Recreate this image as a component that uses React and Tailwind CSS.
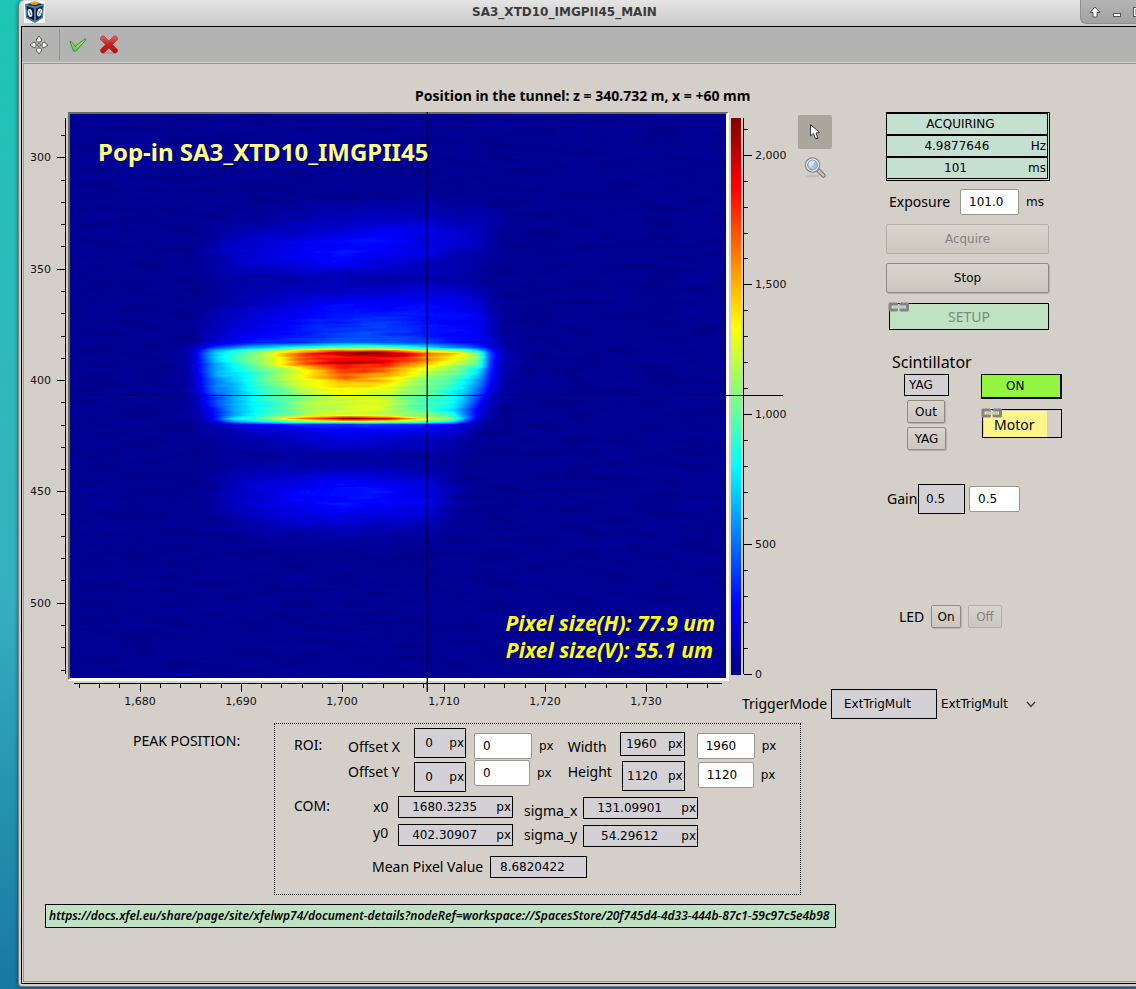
import React from "react";

const UI = "font-['Noto_Sans',sans-serif]";

/* ---------- beam image ---------- */

const XS = [170, 190, 200, 215, 235, 260, 285, 300, 320, 342, 365, 385, 405, 428, 450, 465, 480, 490, 505, 530];

// [y, intensity at each of XS], 0 = background, 100 = saturated
const ROWS = [
  [200, [2, 2, 2, 2, 2, 2, 2, 2, 3, 3, 3, 3, 3, 3, 3, 2, 2, 2, 2, 2]],
  [216, [2, 2, 2, 2, 3, 3, 4, 4, 5, 5, 6, 6, 6, 6, 5, 5, 5, 4, 2, 2]],
  [230, [2, 2, 2, 3, 4, 5, 6, 7, 8, 9, 10, 11, 11, 10, 8, 7, 6, 4, 2, 2]],
  [242, [2, 2, 2, 4, 7, 8, 10, 11, 12, 13, 14, 13, 12, 10, 9, 8, 6, 4, 2, 2]],
  [252, [2, 2, 3, 5, 8, 9, 11, 12, 13, 14, 13, 12, 11, 9, 7, 6, 4, 3, 2, 2]],
  [264, [2, 2, 3, 4, 7, 8, 9, 10, 11, 11, 10, 9, 8, 6, 5, 4, 3, 3, 2, 2]],
  [278, [2, 2, 2, 3, 4, 4, 4, 5, 5, 5, 4, 4, 4, 4, 4, 4, 3, 2, 2, 2]],
  [292, [2, 2, 2, 3, 4, 5, 6, 6, 7, 7, 8, 8, 9, 9, 9, 8, 5, 3, 2, 2]],
  [305, [2, 2, 2, 3, 5, 7, 9, 10, 12, 13, 13, 13, 13, 13, 12, 11, 9, 4, 2, 2]],
  [320, [2, 2, 3, 5, 8, 10, 12, 13, 15, 16, 17, 17, 16, 14, 13, 13, 12, 6, 2, 2]],
  [335, [2, 2, 4, 7, 10, 12, 14, 15, 17, 19, 20, 20, 18, 15, 13, 13, 12, 7, 3, 2]],
  [342, [2, 2, 5, 9, 12, 14, 16, 18, 20, 22, 23, 22, 20, 18, 15, 14, 12, 8, 3, 2]],
  [347, [2, 3, 8, 18, 25, 32, 38, 42, 46, 48, 47, 45, 42, 36, 28, 24, 18, 10, 3, 2]],
  [350, [2, 4, 14, 31, 40, 48, 58, 64, 72, 78, 77, 75, 70, 60, 52, 46, 34, 16, 4, 2]],
  [353, [2, 4, 16, 34, 44, 56, 73, 81, 89, 99, 100, 100, 94, 80, 68, 60, 48, 18, 5, 2]],
  [357, [2, 4, 15, 33, 43, 53, 66, 79, 83, 89, 88, 89, 83, 74, 64, 58, 48, 18, 5, 2]],
  [362, [2, 4, 15, 32, 42, 52, 66, 77, 87, 99, 93, 91, 81, 72, 60, 53, 46, 17, 5, 2]],
  [368, [2, 4, 14, 30, 38, 47, 58, 65, 73, 82, 82, 79, 70, 60, 53, 48, 38, 16, 4, 2]],
  [380, [2, 4, 12, 26, 33, 44, 54, 60, 65, 74, 71, 69, 60, 52, 46, 38, 27, 13, 4, 2]],
  [388, [2, 4, 11, 24, 31, 42, 51, 57, 61, 65, 64, 62, 54, 48, 42, 35, 23, 10, 3, 2]],
  [398, [2, 3, 9, 20, 30, 40, 47, 52, 56, 59, 59, 57, 50, 45, 39, 31, 16, 7, 3, 2]],
  [410, [2, 3, 6, 15, 29, 39, 46, 51, 56, 59, 59, 56, 50, 45, 38, 24, 10, 5, 2, 2]],
  [415, [2, 3, 5, 14, 31, 41, 48, 53, 58, 63, 62, 60, 55, 50, 44, 25, 8, 4, 2, 2]],
  [418, [2, 2, 4, 15, 38, 48, 61, 72, 86, 99, 97, 91, 75, 60, 52, 27, 7, 4, 2, 2]],
  [421, [2, 2, 4, 10, 29, 40, 49, 52, 56, 60, 60, 58, 54, 48, 42, 20, 6, 3, 2, 2]],
  [424, [2, 2, 3, 5, 9, 13, 15, 17, 18, 18, 18, 18, 17, 15, 13, 7, 4, 3, 2, 2]],
  [429, [2, 2, 3, 4, 6, 8, 9, 10, 12, 13, 13, 13, 12, 11, 10, 6, 3, 2, 2, 2]],
  [440, [2, 2, 2, 3, 4, 5, 6, 7, 8, 9, 9, 8, 7, 6, 5, 4, 2, 2, 2, 2]],
  [456, [2, 2, 2, 2, 3, 3, 3, 3, 3, 3, 3, 3, 3, 3, 3, 2, 2, 2, 2, 2]],
  [468, [2, 2, 2, 2, 4, 5, 5, 5, 5, 5, 5, 5, 5, 4, 3, 2, 2, 2, 2, 2]],
  [480, [2, 2, 2, 3, 6, 7, 9, 10, 11, 12, 12, 11, 9, 8, 4, 2, 2, 2, 2, 2]],
  [492, [2, 2, 2, 3, 7, 9, 11, 13, 13, 14, 14, 13, 12, 11, 5, 3, 2, 2, 2, 2]],
  [504, [2, 2, 2, 3, 7, 9, 11, 12, 13, 14, 13, 13, 11, 10, 4, 2, 2, 2, 2, 2]],
  [518, [2, 2, 2, 3, 4, 6, 8, 9, 9, 9, 9, 9, 8, 7, 3, 2, 2, 2, 2, 2]],
  [534, [2, 2, 2, 2, 2, 3, 4, 4, 4, 4, 4, 4, 3, 3, 2, 2, 2, 2, 2, 2]],
  [552, [2, 2, 2, 2, 2, 2, 2, 2, 2, 2, 2, 2, 2, 2, 2, 2, 2, 2, 2, 2]],
];

function profile(y) {
  let i = 0;
  while (i < ROWS.length - 2 && ROWS[i + 1][0] < y) i += 1;
  const [ya, a] = ROWS[i];
  const [yb, b] = ROWS[i + 1];
  const t = Math.min(1, Math.max(0, (y - ya) / (yb - ya)));
  return a.map((v, k) => {
    const ripple = 1 + 0.02 * Math.sin(y * 1.3 + k * 0.9) + 0.015 * Math.sin(y * 0.7 - k * 1.3);
    return Math.min(100, (v + (b[k] - v) * t) * ripple);
  });
}

const STRIPS = Array.from({ length: 352 }, (_, i) => 200 + i);

const JET_R = "0 0 0 0 0.5 1 1 1 0.5";
const JET_G = "0 0 0.5 1 1 1 0.5 0 0";
const JET_B = "0.5 1 1 1 0.5 0 0 0 0";

function Beam() {
  return (
    <>
      <defs>
        <filter id="jet" filterUnits="userSpaceOnUse" x="70" y="114" width="656" height="564" colorInterpolationFilters="sRGB">
          <feTurbulence type="fractalNoise" baseFrequency="0.025 0.16" numOctaves="2" seed="7" result="t" />
          <feColorMatrix in="t" type="matrix" values="1 0 0 0 0  1 0 0 0 0  1 0 0 0 0  0 0 0 0 1" result="n" />
          <feGaussianBlur in="SourceGraphic" stdDeviation="3 0.6" result="s" />
          <feComposite in="s" in2="n" operator="arithmetic" k1="0.12" k2="0.93" k3="0.03" k4="-0.016" result="m" />
          <feColorMatrix in="m" type="matrix" values="1 0 0 0 0  0 1 0 0 0  0 0 1 0 0  0 0 0 0 1" />
          <feComponentTransfer>
            <feFuncR type="table" tableValues={JET_R} />
            <feFuncG type="table" tableValues={JET_G} />
            <feFuncB type="table" tableValues={JET_B} />
          </feComponentTransfer>
        </filter>
        {STRIPS.map((y) => (
          <linearGradient key={y} id={`r${y}`} gradientUnits="userSpaceOnUse" x1="170" y1="0" x2="530" y2="0">
            {profile(y).map((v, k) => {
              const g = Math.round(v * 2.55);
              return <stop key={k} offset={(XS[k] - 170) / 360} stopColor={`rgb(${g},${g},${g})`} />;
            })}
          </linearGradient>
        ))}
      </defs>
      <g filter="url(#jet)">
        <rect x="60" y="104" width="676" height="584" fill="rgb(5,5,5)" />
        {STRIPS.map((y) => (
          <rect key={y} x="60" y={y} width="676" height="1" fill={`url(#r${y})`} />
        ))}
      </g>
    </>
  );
}

/* ---------- plot ---------- */

const Y_MAJOR = [[157, "300"], [269, "350"], [380, "400"], [491, "450"], [603, "500"]];
const Y_MINOR = [135, 180, 202, 224, 246, 291, 313, 336, 358, 402, 425, 447, 469, 514, 536, 558, 580, 625, 647, 670];
const X_MAJOR = [[140, "1,680"], [241, "1,690"], [342, "1,700"], [444, "1,710"], [545, "1,720"], [646, "1,730"]];
const X_MINOR = [79, 99, 119, 160, 180, 200, 221, 261, 281, 302, 322, 362, 383, 403, 423, 464, 484, 504, 525, 565, 585, 606, 626, 666, 687, 707];

function Plot() {
  return (
    <svg className="block shrink-0 font-['DejaVu_Sans',sans-serif]" width="705" height="600" viewBox="24 112 705 600" role="img" aria-label="Camera image">
      <Beam />
      <path d="M68 680V112H729L727 114H70V678Z" fill="#6b6966" />
      <path d="M68 681L70 678H726V114L729 112V681Z" fill="#fff" />
      <g stroke="#000" strokeWidth="1" shapeRendering="crispEdges">
        <path d="M65.5 118V674M74 683.5H722" />
        <path d={Y_MAJOR.map(([y]) => `M57 ${y}.5H65`).join("") + Y_MINOR.map((y) => `M61 ${y}.5H65`).join("")} />
        <path d={X_MAJOR.map(([x]) => `M${x}.5 684V692`).join("") + X_MINOR.map((x) => `M${x}.5 684V688`).join("")} />
        <path d="M78 395.5H729M427.5 112V692" />
        <path d="M426.5 112V692" opacity="0.4" />
      </g>
      <g fontSize="11" fill="#111">
        {Y_MAJOR.map(([y, t]) => <text key={t} x="51" y={y + 4} textAnchor="end">{t}</text>)}
        {X_MAJOR.map(([x, t]) => <text key={t} x={x} y="705" textAnchor="middle">{t}</text>)}
      </g>
      <g className="font-['Noto_Sans',sans-serif]" fontWeight="700">
        <text x="98" y="161" fontSize="24" fill="#ffff7f">Pop-in SA3_XTD10_IMGPII45</text>
        <g fontSize="21" fontStyle="italic" fill="#ffff00" textAnchor="end">
          <text x="715" y="631">Pixel size(H): 77.9 um</text>
          <text x="713" y="658">Pixel size(V): 55.1 um</text>
        </g>
      </g>
    </svg>
  );
}

const C_MAJOR = [[155, "2,000"], [284, "1,500"], [414, "1,000"], [544, "500"], [674, "0"]];
const C_MINOR = [129, 181, 207, 233, 258, 310, 336, 362, 388, 440, 466, 492, 518, 570, 596, 622, 648];

function ColorBar() {
  return (
    <svg className="block shrink-0 font-['DejaVu_Sans',sans-serif]" width="67" height="572" viewBox="729 112 67 572" role="img" aria-label="Color scale">
      <defs>
        <linearGradient id="bar" x1="0" y1="0" x2="0" y2="1">
          <stop offset="0" stopColor="#800000" />
          <stop offset="0.125" stopColor="#ff0000" />
          <stop offset="0.375" stopColor="#ffff00" />
          <stop offset="0.5" stopColor="#80ff80" />
          <stop offset="0.625" stopColor="#00ffff" />
          <stop offset="0.875" stopColor="#0000ff" />
          <stop offset="1" stopColor="#000080" />
        </linearGradient>
      </defs>
      <rect x="731" y="118" width="10" height="557" fill="url(#bar)" />
      <g stroke="#000" strokeWidth="1" shapeRendering="crispEdges">
        <path d="M743.5 118V674M729 395.5H783" />
        <path d={C_MAJOR.map(([y]) => `M744 ${y}.5H752`).join("") + C_MINOR.map((y) => `M744 ${y}.5H748`).join("")} />
      </g>
      <g fontSize="11" fill="#111">
        {C_MAJOR.map(([y, t]) => <text key={t} x="755" y={y + 4}>{t}</text>)}
      </g>
    </svg>
  );
}

/* ---------- icons ---------- */

function CubeIcon() {
  return (
    <svg width="21" height="22" viewBox="0 0 21 22" aria-hidden="true">
      <rect width="21" height="22" fill="#fff" />
      <path d="M1 3L10.500 1L20 3L19 17L11 22L2 17Z" fill="#3f86a8" />
      <path d="M2.500 5L10 7.500V19.500L3.500 16Z" fill="#0c1540" />
      <path d="M18.500 5L12 7.500V19.500L17.500 16Z" fill="#0c1540" />
      <path d="M3 3.500L10.500 2L18 3.500L11 5.500Z" fill="#12384f" />
      <ellipse cx="10.500" cy="2" rx="4" ry="1.800" fill="#f59f0a" />
      <ellipse cx="6" cy="12" rx="2.300" ry="4" fill="#e6eaf0" transform="rotate(-12 6 12)" />
      <ellipse cx="15.500" cy="11.500" rx="2.300" ry="4" fill="#e6eaf0" transform="rotate(14 15.500 11.500)" />
      <path d="M5 9.500L7 14M14.500 13.500L16.500 9.500M14.500 10.500L16.500 12.500" stroke="#5a6a90" strokeWidth="0.900" />
    </svg>
  );
}

function MoveIcon() {
  return (
    <svg width="20" height="20" viewBox="0 0 20 20" aria-hidden="true" fill="#f1f1ee" stroke="#5c5c58" strokeWidth="1" strokeLinejoin="round">
      <path d="M10 1L13 5L11.500 7H8.500L7 5Z" />
      <path d="M10 19L13 15L11.500 13H8.500L7 15Z" />
      <path d="M1 10L5 7L7 8.500V11.500L5 13Z" />
      <path d="M19 10L15 7L13 8.500V11.500L15 13Z" />
      <circle cx="10" cy="10" r="1.400" />
    </svg>
  );
}

function CheckIcon() {
  return (
    <svg width="18" height="16" viewBox="0 0 18 16" aria-hidden="true">
      <defs>
        <linearGradient id="ck" x1="0" y1="0" x2="0" y2="1">
          <stop offset="0" stopColor="#b4f08a" />
          <stop offset="1" stopColor="#4fd02c" />
        </linearGradient>
      </defs>
      <path d="M1 4.500L3.500 5.500L6 9.500L16.500 1.500L16 4L6.500 14.500L4.500 14Z" fill="url(#ck)" stroke="#3c8a3c" strokeWidth="1" strokeLinejoin="round" />
    </svg>
  );
}

function CrossIcon() {
  return (
    <svg width="20" height="20" viewBox="0 0 20 20" aria-hidden="true">
      <defs>
        <linearGradient id="cx" x1="0" y1="0" x2="0" y2="1">
          <stop offset="0" stopColor="#e26060" />
          <stop offset="0.500" stopColor="#cc2020" />
          <stop offset="1" stopColor="#b50f0f" />
        </linearGradient>
      </defs>
      <ellipse cx="10" cy="18" rx="7" ry="1.200" fill="#9d9d9d" />
      <path d="M3 1L5 1L10 6L15 1H17L18.500 3V4.500L13.500 9.500L18.500 14.500V16.500L17 18H15L10 13L5 18H3L1.500 16.500V14.500L6.500 9.500L1.500 4.500V3Z" fill="url(#cx)" stroke="#b02a2a" strokeWidth="0.600" strokeLinejoin="round" />
    </svg>
  );
}

function PointerIcon() {
  return (
    <svg width="12" height="18" viewBox="0 0 12 18" aria-hidden="true">
      <path d="M1.500 1.500V13L4.300 10.500L6.500 15.500H9L7 10L10.500 9.500Z" fill="#fff" stroke="#3a3a38" strokeWidth="1" strokeLinejoin="round" />
    </svg>
  );
}

function MagnifierIcon() {
  return (
    <svg width="24" height="24" viewBox="0 0 24 24" aria-hidden="true">
      <ellipse cx="10" cy="20" rx="7" ry="1.500" fill="#bfbbb3" />
      <path d="M15 14L20.500 19.500" stroke="#77756f" strokeWidth="4.500" strokeLinecap="round" />
      <path d="M15 14L20.500 19.500" stroke="#c9c8c5" strokeWidth="2.200" strokeLinecap="round" />
      <circle cx="9.500" cy="9" r="7" fill="#9bb7d8" stroke="#8b8b88" strokeWidth="1.400" />
      <circle cx="9.500" cy="9" r="5.800" fill="#a9c0dd" stroke="#f3f4f6" strokeWidth="1.200" />
      <circle cx="9.500" cy="9" r="4.900" fill="none" stroke="#6f95c8" strokeWidth="0.900" />
      <path d="M5.500 9A4 4 0 0 1 12 5.500L8 12Z" fill="#dbe6f2" />
    </svg>
  );
}

function LinkIcon() {
  return (
    <svg className="absolute -top-0.5 -left-0.5" width="22" height="10" viewBox="0 0 22 10" aria-hidden="true">
      <path d="M5 5H17" stroke="#c8c8c8" strokeWidth="2" />
      <path d="M8.500 3.500V2H2V8H8.500V6.500M13 3.500V2H19.500V8H13V6.500" fill="none" stroke="#848484" strokeWidth="3" strokeLinejoin="round" />
      <path d="M7 5H15" stroke="#c8c8c8" strokeWidth="1.600" />
    </svg>
  );
}

/* ---------- controls ---------- */

function Label({ children, htmlFor, className = "" }) {
  const cls = `${UI} text-sm leading-5 whitespace-nowrap ${className}`;
  return htmlFor ? <label htmlFor={htmlFor} className={cls}>{children}</label> : <span className={cls}>{children}</span>;
}

function Readout({ value, unit, label, className = "" }) {
  return (
    <output aria-label={label} className={`flex items-center border border-black bg-[#d4d1d6] pr-px ${className}`}>
      <span className={unit ? "flex-1 pr-1.5 text-center" : "flex-1"}>{value}</span>
      {unit && <span>{unit}</span>}
    </output>
  );
}

function Field({ id, value, label, className = "" }) {
  return (
    <input
      id={id}
      aria-label={label}
      defaultValue={value}
      className={`h-[26px] rounded-xs border border-[#9a978f] bg-white px-2 outline-none ${className}`}
    />
  );
}

function Button({ children, className = "", disabled = false }) {
  return (
    <button
      type="button"
      disabled={disabled}
      className={`rounded-xs border bg-linear-to-b from-[#d9d5ce] to-[#cbc7be] ${disabled ? "border-[#b3afa7] text-[#85827c]" : "border-[#8f8c85] shadow-[1px_1px_0_#b5b1a9]"} ${className}`}
    >
      {children}
    </button>
  );
}

function StatusRow({ value, unit }) {
  return (
    <div className="flex h-[22px] items-center border-y border-r border-black pr-px">
      <span className={unit ? "flex-1 pr-1 text-center" : "flex-1 pr-3 text-center"}>{value}</span>
      {unit && <span>{unit}</span>}
    </div>
  );
}

function Controls() {
  return (
    <section className="ml-[54px] flex w-[176px] shrink-0 flex-col">
      <div className="w-[164px] border border-black bg-[#c5dfd0] pr-px pb-px">
        <StatusRow value="ACQUIRING" />
        <StatusRow value="4.9877646" unit="Hz" />
        <StatusRow value="101" unit="ms" />
      </div>

      <div className="mt-2 flex items-center pl-[3px]">
        <Label htmlFor="exposure" className="w-[71px]">Exposure</Label>
        <Field id="exposure" value="101.0" className="w-[59px]" />
        <span className="ml-[7px]">ms</span>
      </div>

      <Button disabled className="mt-[9px] h-[30px] w-[163px]">Acquire</Button>
      <Button className="mt-[9px] h-[30px] w-[163px]">Stop</Button>

      <button type="button" disabled className={`relative mt-2.5 ml-[3px] h-[27px] w-[160px] border border-black bg-[#bfe2c3] text-sm text-[#7c8a7d] ${UI}`}>
        <LinkIcon />
        SETUP
      </button>

      <span className={`mt-5 ml-1.5 text-base leading-6 ${UI}`}>Scintillator</span>
      <div className="flex items-start justify-between pl-[18px]">
        <div className="flex flex-col items-start">
          <Readout label="Scintillator position" value="YAG" className="h-[22px] w-[45px] pl-1" />
          <Button className="mt-1 ml-[3px] h-[23px] w-[38px]">Out</Button>
          <Button className="mt-1 ml-[3px] h-[23px] w-[39px]">YAG</Button>
        </div>
        <div className="flex flex-col gap-2.5">
          <output className="flex h-[25px] w-[81px] items-center border border-r-2 border-b-2 border-black bg-[#94f540] pl-6">ON</output>
          <button type="button" className={`relative ml-px flex h-[29px] w-20 border border-black pt-px pl-px text-left text-sm ${UI}`}>
            <LinkIcon />
            <span className="flex h-full w-[63px] items-center bg-[#fff58c] pt-0.5 pl-2.5">Motor</span>
          </button>
        </div>
      </div>

      <div className="mt-[34px] flex items-center pl-px">
        <Label htmlFor="gain" className="w-[31px]">Gain</Label>
        <Readout label="Current gain" value="0.5" className="h-[30px] w-[47px] pl-[7px]" />
        <Field id="gain" value="0.5" className="ml-1 w-[51px]" />
      </div>

      <div className="mt-[91px] flex items-center pl-[13px]">
        <Label className="w-8">LED</Label>
        <Button className="h-[23px] w-[30px]">On</Button>
        <Button disabled className="ml-[7px] h-[23px] w-[34px]">Off</Button>
      </div>
    </section>
  );
}

function TriggerMode() {
  return (
    <div className="mt-[5px] flex items-center pl-[13px]">
      <Label htmlFor="trigger" className="w-[89px]">TriggerMode</Label>
      <Readout label="Current trigger mode" value="ExtTrigMult" className="h-[30px] w-[106px] pl-3" />
      <div className="relative">
        <select id="trigger" defaultValue="ExtTrigMult" className="h-7 w-[106px] appearance-none bg-transparent pl-1 outline-none">
          <option>ExtTrigMult</option>
        </select>
        <svg className="pointer-events-none absolute top-[11px] right-[7px]" width="10" height="7" viewBox="0 0 10 7" aria-hidden="true">
          <path d="M1 1L5 5.500L9 1" fill="none" stroke="#333" strokeWidth="1.200" />
        </svg>
      </div>
    </div>
  );
}

function PeakPanel() {
  return (
    <div className="w-[527px] border border-dotted border-black pt-1 pb-4 pl-[19px]">
      <div className="flex items-start">
        <Label className="w-[54px] pt-[7px]">ROI:</Label>
        <div className="flex w-[66px] flex-col gap-[5px] pt-[9px]">
          <Label htmlFor="offx">Offset X</Label>
          <Label htmlFor="offy">Offset Y</Label>
        </div>
        <div className="flex flex-col gap-1">
          <Readout label="Current offset X" value="0" unit="px" className="h-[30px] w-[52px]" />
          <Readout label="Current offset Y" value="0" unit="px" className="h-[30px] w-[52px]" />
        </div>
        <div className="ml-2 flex flex-col gap-px pt-[5px]">
          <div className="flex items-center"><Field id="offx" value="0" className="w-[58px]" /><span className="ml-[7px]">px</span></div>
          <div className="flex items-center"><Field id="offy" value="0" className="w-14" /><span className="ml-[7px]">px</span></div>
        </div>
        <div className="ml-3.5 flex w-[52px] flex-col gap-[5px] pt-[9px]">
          <Label htmlFor="width">Width</Label>
          <Label htmlFor="height">Height</Label>
        </div>
        <div className="flex flex-col items-end gap-[5px] pt-1">
          <Readout label="Current width" value="1960" unit="px" className="h-6 w-[65px]" />
          <Readout label="Current height" value="1120" unit="px" className="h-[30px] w-[63px]" />
        </div>
        <div className="ml-3 flex flex-col gap-[3px] pt-[5px]">
          <div className="flex items-center"><Field id="width" value="1960" className="w-[58px]" /><span className="ml-[7px]">px</span></div>
          <div className="flex items-center pl-px"><Field id="height" value="1120" className="w-14" /><span className="ml-[7px]">px</span></div>
        </div>
      </div>

      <div className="mt-1 flex items-start">
        <Label className="w-[79px]">COM:</Label>
        <div className="flex w-[25px] flex-col gap-1.5 pt-px">
          <Label>x0</Label>
          <Label>y0</Label>
        </div>
        <div className="flex flex-col gap-1.5">
          <Readout label="x0" value="1680.3235" unit="px" className="h-[22px] w-[115px]" />
          <Readout label="y0" value="402.30907" unit="px" className="h-[22px] w-[115px]" />
        </div>
        <div className="ml-[11px] flex w-[59px] flex-col gap-1 pt-[5px]">
          <Label>sigma_x</Label>
          <Label>sigma_y</Label>
        </div>
        <div className="flex flex-col gap-1.5 pt-px">
          <Readout label="sigma_x" value="131.09901" unit="px" className="h-[22px] w-[115px]" />
          <Readout label="sigma_y" value="54.29612" unit="px" className="h-[22px] w-[115px]" />
        </div>
      </div>

      <div className="mt-[9px] flex items-center pl-[78px]">
        <Label className="w-[118px]">Mean Pixel Value</Label>
        <Readout label="Mean pixel value" value="8.6820422" className="h-[22px] w-[97px] pl-[9px]" />
      </div>
    </div>
  );
}

const DOC = "https://docs.xfel.eu/share/page/site/xfelwp74/document-details?nodeRef=workspace://SpacesStore/20f745d4-4d33-444b-87c1-59c97c5e4b98";

export default function App() {
  return (
    <div className="flex min-h-screen flex-col overflow-hidden bg-linear-to-b from-[#1cc6b5] via-[#36b0c0] via-60% to-[#1778a2] pb-0.5 pl-[18px] font-['DejaVu_Sans',sans-serif] text-xs text-black">
      <div className="flex flex-1 flex-col rounded-tl-md rounded-bl border-b border-l border-[#7b7b7b] bg-[#cfcfcf] pb-0.5 pl-0.5 shadow-[0_0_4px_#00000080]">
        <header className="flex h-[26px] items-start rounded-tl-md bg-linear-to-b from-[#e4e4e4] via-[#d6d6d6] to-[#c9c9c9]">
          <span className="ml-[3px] pt-px"><CubeIcon /></span>
          <h1 className="flex-1 pt-1 pl-1 text-center text-xs leading-4 font-bold text-[#3b3b3b]">SA3_XTD10_IMGPII45_MAIN</h1>
          <div className="flex h-6 w-14 shrink-0 items-center gap-3 overflow-hidden rounded-bl-md border-b border-l border-[#8e8e8e] bg-linear-to-b from-[#b4b4b4] to-[#a2a2a2] pl-2">
            <button type="button" aria-label="Shade" className="shrink-0">
              <svg width="12" height="12" viewBox="0 0 12 12" aria-hidden="true">
                <path d="M6 1L11 6.500H8V11H4V6.500H1Z" fill="#fff" stroke="#555" strokeWidth="1" strokeLinejoin="round" />
              </svg>
            </button>
            <button type="button" aria-label="Minimize" className="shrink-0">
              <svg width="8" height="12" viewBox="0 0 8 12" aria-hidden="true">
                <rect x="0.500" y="7.500" width="7" height="3" fill="#fff" stroke="#555" />
              </svg>
            </button>
            <button type="button" aria-label="Maximize" className="shrink-0">
              <svg width="10" height="12" viewBox="0 0 10 12" aria-hidden="true">
                <rect x="0.500" y="1.500" width="9" height="9" fill="#a9a9a9" stroke="#555" />
                <rect x="1.500" y="2.500" width="7" height="7" fill="none" stroke="#fff" />
              </svg>
            </button>
          </div>
        </header>

        <div className="flex flex-1 flex-col border-y border-l border-black bg-[#d4cfc8]">
          <div className="flex h-[35px] shrink-0 items-center bg-[#b3b3b3]">
            <button type="button" aria-label="Move" className="ml-[7px]"><MoveIcon /></button>
            <span className="ml-2.5 h-[31px] w-px bg-[#98958f]" />
            <button type="button" aria-label="Apply all" className="ml-[9px]"><CheckIcon /></button>
            <button type="button" aria-label="Decline all" className="ml-3"><CrossIcon /></button>
          </div>

          <main className="mt-px mb-px ml-px flex flex-1 flex-col border-y border-l border-[#9c988f]">
            <h2 className={`mt-[22px] ml-[391px] text-sm leading-5 font-bold ${UI}`}>Position in the tunnel: z = 340.732 m, x = +60 mm</h2>

            <div className="mt-1.5 flex items-start">
              <Plot />
              <div className="flex flex-col">
                <div className="flex items-start">
                  <ColorBar />
                  <div className="mt-[3px] ml-0.5 flex flex-col items-center gap-[7px]">
                    <button type="button" aria-label="Pointer" className="flex size-[34px] items-center justify-center rounded-xs bg-[#aaa69e]"><PointerIcon /></button>
                    <button type="button" aria-label="Zoom"><MagnifierIcon /></button>
                  </div>
                  <Controls />
                </div>
                <TriggerMode />
              </div>
            </div>

            <div className="mt-1 flex items-start pl-[109px]">
              <Label className="w-[141px] pt-2">PEAK POSITION:</Label>
              <PeakPanel />
            </div>

            <div className="mt-[9px] mb-8 ml-[21px] flex h-6 w-[791px] items-center border border-black bg-[#bfe2c3] px-[3px]">
              <a href={DOC} className={`text-xs font-semibold whitespace-nowrap italic ${UI}`}>{DOC}</a>
            </div>
          </main>
        </div>
      </div>
    </div>
  );
}
